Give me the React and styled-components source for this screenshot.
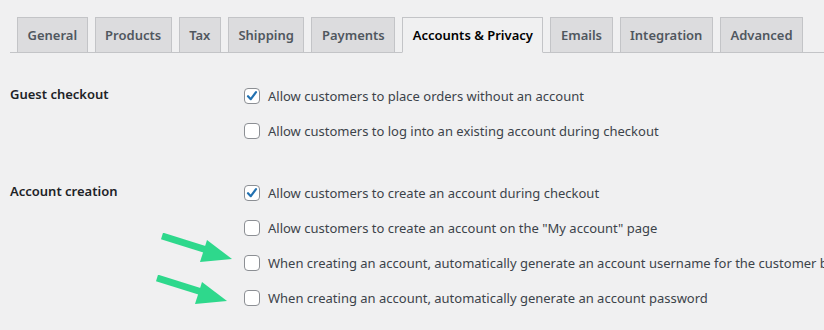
import React from 'react';
import styled, { createGlobalStyle } from 'styled-components';

const tabs = [
  'General',
  'Products',
  'Tax',
  'Shipping',
  'Payments',
  'Accounts & Privacy',
  'Emails',
  'Integration',
  'Advanced',
];

const sections = [
  {
    title: 'Guest checkout',
    options: [
      { label: 'Allow customers to place orders without an account', checked: true },
      { label: 'Allow customers to log into an existing account during checkout' },
    ],
  },
  {
    title: 'Account creation',
    options: [
      { label: 'Allow customers to create an account during checkout', checked: true },
      { label: 'Allow customers to create an account on the "My account" page' },
      {
        label:
          'When creating an account, automatically generate an account username for the customer based on their name, surname or email',
      },
      { label: 'When creating an account, automatically generate an account password' },
    ],
  },
];

const Checkbox = ({ checked }) => (
  <Box>
    {checked && (
      <svg width="14" height="14" viewBox="0 0 14 14">
        <path
          d="M3 7.2 L5.8 10.2 L11 3.2"
          fill="none"
          stroke="#2271b1"
          strokeWidth="2.2"
          strokeLinecap="round"
          strokeLinejoin="round"
        />
      </svg>
    )}
  </Box>
);

const Arrow = ({ x, y }) => (
  <ArrowMark style={{ left: x, top: y }} width="80" height="34" viewBox="0 0 80 34">
    <path d="M2 3 L50 18" stroke="#2ed88c" strokeWidth="7" strokeLinecap="butt" />
    <path d="M72 26 L47 7 L40 29 Z" fill="#2ed88c" />
  </ArrowMark>
);

const App = () => (
  <Page>
    <GlobalStyle />
    <TabBar>
      {tabs.map(t => (
        <Tab key={t} active={t === 'Accounts & Privacy'}>
          {t}
        </Tab>
      ))}
    </TabBar>

    <Settings>
      {sections.map(s => (
        <Section key={s.title}>
          <Heading>{s.title}</Heading>
          <Options>
            {s.options.map(o => (
              <Option key={o.label}>
                <Checkbox checked={o.checked} />
                <span>{o.label}</span>
              </Option>
            ))}
          </Options>
        </Section>
      ))}
    </Settings>

    <Arrow x={160} y={233} />
    <Arrow x={155} y={275} />
  </Page>
);

const GlobalStyle = createGlobalStyle`
  html, body {
    margin: 0;
    padding: 0;
    background: #f0f0f1;
    overflow: hidden;
  }
  body {
    font-family: "Noto Sans", "Open Sans", sans-serif;
    font-size: 13px;
    color: #3c434a;
  }
`;

const Page = styled.div`
  position: relative;
  width: 824px;
  height: 330px;
  padding-left: 10px;
  box-sizing: border-box;
  overflow: hidden;
`;

const TabBar = styled.div`
  display: flex;
  gap: 7px;
  padding: 17px 0 0 7px;
  border-bottom: 1px solid #c3c4c7;
  margin-right: -20px;
`;

const Tab = styled.div`
  box-sizing: border-box;
  height: 36px;
  padding: 0 9.5px;
  display: flex;
  align-items: center;
  font-size: 13px;
  font-weight: 600;
  color: ${p => (p.active ? '#000' : '#50575e')};
  background: ${p => (p.active ? '#f0f0f1' : '#dcdcde')};
  border: 1px solid #c3c4c7;
  border-bottom-color: ${p => (p.active ? '#f0f0f1' : '#c3c4c7')};
  margin-bottom: -1px;
  white-space: nowrap;
`;

const Settings = styled.div`
  display: flex;
  flex-direction: column;
  gap: 27px;
  padding-top: 25px;
`;

const Section = styled.div`
  display: grid;
  grid-template-columns: 234px 1fr;
`;

const Heading = styled.div`
  height: 35px;
  line-height: 33px;
  font-weight: 600;
  color: #1d2327;
`;

const Options = styled.div`
  display: flex;
  flex-direction: column;
`;

const Option = styled.label`
  height: 35px;
  display: flex;
  align-items: center;
  gap: 8px;
  white-space: nowrap;
`;

const Box = styled.span`
  flex: none;
  box-sizing: border-box;
  width: 16px;
  height: 16px;
  border: 1px solid #8c8f94;
  border-radius: 4px;
  background: #fff;
  display: flex;
  align-items: center;
  justify-content: center;
`;

const ArrowMark = styled.svg`
  position: absolute;
`;

export default App;
